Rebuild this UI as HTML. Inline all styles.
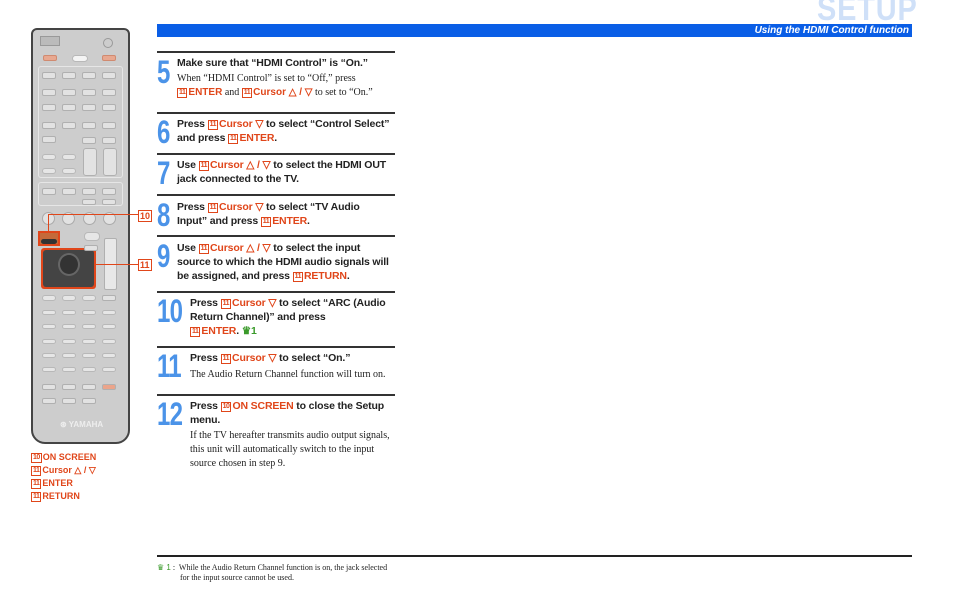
<!DOCTYPE html>
<html><head><meta charset="utf-8"><style>
*{margin:0;padding:0;box-sizing:border-box}
body{width:953px;height:605px;background:#fff;position:relative;overflow:hidden;font-family:"Liberation Sans",sans-serif}
.a{position:absolute}
.b{position:absolute;background:#e2e2e2;border:1px solid #b0b0b0;border-radius:2px}
.p{position:absolute;background:#e6e6e6;border:1px solid #b8b8b8;border-radius:4px}
.rule{position:absolute;left:157px;width:238px;height:2px;background:#333}
.n{position:absolute;left:157px;font:bold 32px/28px "Liberation Sans",sans-serif;color:#4b93e8;transform:scaleX(.75);transform-origin:left top;letter-spacing:-1px}
.h{position:absolute;font:bold 10.5px/14px "Liberation Sans",sans-serif;letter-spacing:-0.15px;color:#222;width:225px}
.t{position:absolute;font:10px/14px "Liberation Serif",serif;color:#222;width:220px}
.o{color:#e0461a}
.k{display:inline-block;border:1px solid #e0461a;color:#e0461a;font-size:7px;line-height:8px;padding:0 1px;margin-right:1px;vertical-align:1px;letter-spacing:-0.5px}
.g{color:#3a9a2a}
.lg{position:absolute;left:31px;font:bold 9px/12px "Liberation Sans",sans-serif;color:#e0461a}
</style></head><body>

<div class="a" style="left:817px;top:-8px;font:bold 34px/34px 'Liberation Sans',sans-serif;color:#cfe0f8;letter-spacing:1px;transform:scaleX(.85);transform-origin:left top">SETUP</div>
<div class="a" style="left:157px;top:24px;width:755px;height:13px;background:#0a5ee6"></div>
<div class="a" style="left:700px;top:24px;width:209px;text-align:right;font:italic bold 10px/13px 'Liberation Sans',sans-serif;color:#fff">Using the HDMI Control function</div>

<!-- remote -->
<div class="a" style="left:31px;top:28px;width:99px;height:416px;background:#cdcdcd;border:2px solid #444;border-radius:6px 6px 14px 14px"></div>
<div class="a" style="left:40px;top:36px;width:20px;height:10px;background:#bbb;border:1px solid #999"></div>
<div class="a" style="left:103px;top:38px;width:10px;height:10px;border:1px solid #999;border-radius:50%"></div>
<div class="b" style="left:43px;top:55px;width:14px;height:6px;background:#e8a890;border-color:#d08a70"></div>
<div class="b" style="left:102px;top:55px;width:14px;height:6px;background:#e8a890;border-color:#d08a70"></div>
<div class="p" style="left:72px;top:55px;width:16px;height:7px;background:#f4f4f4"></div>
<div class="a" style="left:38px;top:66px;width:85px;height:112px;border:1px solid #e6e6e6;border-radius:3px"></div>
<div class="b" style="left:42px;top:72px;width:14px;height:7px"></div><div class="b" style="left:62px;top:72px;width:14px;height:7px"></div><div class="b" style="left:82px;top:72px;width:14px;height:7px"></div><div class="b" style="left:102px;top:72px;width:14px;height:7px"></div>
<div class="b" style="left:42px;top:89px;width:14px;height:7px"></div><div class="b" style="left:62px;top:89px;width:14px;height:7px"></div><div class="b" style="left:82px;top:89px;width:14px;height:7px"></div><div class="b" style="left:102px;top:89px;width:14px;height:7px"></div>
<div class="b" style="left:42px;top:104px;width:14px;height:7px"></div><div class="b" style="left:62px;top:104px;width:14px;height:7px"></div><div class="b" style="left:82px;top:104px;width:14px;height:7px"></div><div class="b" style="left:102px;top:104px;width:14px;height:7px"></div>
<div class="b" style="left:42px;top:122px;width:14px;height:7px"></div><div class="b" style="left:62px;top:122px;width:14px;height:7px"></div><div class="b" style="left:82px;top:122px;width:14px;height:7px"></div><div class="b" style="left:102px;top:122px;width:14px;height:7px"></div>
<div class="b" style="left:42px;top:136px;width:14px;height:7px"></div><div class="b" style="left:82px;top:137px;width:14px;height:7px"></div><div class="b" style="left:102px;top:137px;width:14px;height:7px"></div>
<div class="p" style="left:42px;top:154px;width:14px;height:6px"></div><div class="p" style="left:62px;top:154px;width:14px;height:6px"></div>
<div class="p" style="left:42px;top:168px;width:14px;height:6px"></div><div class="p" style="left:62px;top:168px;width:14px;height:6px"></div>
<div class="b" style="left:83px;top:148px;width:14px;height:28px;border-radius:3px"></div><div class="b" style="left:103px;top:148px;width:14px;height:28px;border-radius:3px"></div>
<div class="a" style="left:38px;top:182px;width:85px;height:24px;border:1px solid #e6e6e6;border-radius:3px"></div>
<div class="b" style="left:42px;top:188px;width:14px;height:7px"></div><div class="b" style="left:62px;top:188px;width:14px;height:7px"></div><div class="b" style="left:82px;top:188px;width:14px;height:7px"></div><div class="b" style="left:102px;top:188px;width:14px;height:7px"></div>
<div class="b" style="left:82px;top:199px;width:14px;height:6px"></div><div class="b" style="left:102px;top:199px;width:14px;height:6px"></div>
<div class="a" style="left:42px;top:212px;width:13px;height:13px;border-radius:50%;background:#e2e2e2;border:1px solid #aaa"></div>
<div class="a" style="left:62px;top:212px;width:13px;height:13px;border-radius:50%;background:#e2e2e2;border:1px solid #aaa"></div>
<div class="a" style="left:83px;top:212px;width:13px;height:13px;border-radius:50%;background:#e2e2e2;border:1px solid #aaa"></div>
<div class="a" style="left:103px;top:212px;width:13px;height:13px;border-radius:50%;background:#e2e2e2;border:1px solid #aaa"></div>
<div class="a" style="left:38px;top:231px;width:22px;height:15px;background:#c46a3a;border:2px solid #e0461a"></div>
<div class="a" style="left:41px;top:239px;width:16px;height:5px;background:#333;border-radius:3px"></div>
<div class="p" style="left:84px;top:232px;width:16px;height:9px"></div>
<div class="b" style="left:104px;top:238px;width:13px;height:52px;background:#e8e8e8"></div>
<div class="a" style="left:41px;top:248px;width:55px;height:41px;background:#e0461a;border-radius:3px"></div>
<div class="a" style="left:43px;top:250px;width:51px;height:37px;background:#444;border-radius:3px"></div>
<div class="a" style="left:58px;top:253px;width:22px;height:23px;border-radius:50%;background:#333;border:2px solid #666"></div>
<div class="b" style="left:84px;top:245px;width:14px;height:6px"></div>
<div class="p" style="left:42px;top:295px;width:14px;height:6px"></div><div class="p" style="left:62px;top:295px;width:14px;height:6px"></div><div class="p" style="left:82px;top:295px;width:14px;height:6px"></div><div class="b" style="left:102px;top:295px;width:14px;height:6px"></div>
<div class="p" style="left:42px;top:310px;width:14px;height:5px"></div><div class="p" style="left:62px;top:310px;width:14px;height:5px"></div><div class="p" style="left:82px;top:310px;width:14px;height:5px"></div><div class="p" style="left:102px;top:310px;width:14px;height:5px"></div>
<div class="p" style="left:42px;top:324px;width:14px;height:5px"></div><div class="p" style="left:62px;top:324px;width:14px;height:5px"></div><div class="p" style="left:82px;top:324px;width:14px;height:5px"></div><div class="p" style="left:102px;top:324px;width:14px;height:5px"></div>
<div class="p" style="left:42px;top:339px;width:14px;height:5px"></div><div class="p" style="left:62px;top:339px;width:14px;height:5px"></div><div class="p" style="left:82px;top:339px;width:14px;height:5px"></div><div class="p" style="left:102px;top:339px;width:14px;height:5px"></div>
<div class="p" style="left:42px;top:353px;width:14px;height:5px"></div><div class="p" style="left:62px;top:353px;width:14px;height:5px"></div><div class="p" style="left:82px;top:353px;width:14px;height:5px"></div><div class="p" style="left:102px;top:353px;width:14px;height:5px"></div>
<div class="p" style="left:42px;top:367px;width:14px;height:5px"></div><div class="p" style="left:62px;top:367px;width:14px;height:5px"></div><div class="p" style="left:82px;top:367px;width:14px;height:5px"></div><div class="p" style="left:102px;top:367px;width:14px;height:5px"></div>
<div class="b" style="left:42px;top:384px;width:14px;height:6px"></div><div class="b" style="left:62px;top:384px;width:14px;height:6px"></div><div class="b" style="left:82px;top:384px;width:14px;height:6px"></div><div class="b" style="left:102px;top:384px;width:14px;height:6px;background:#eba48a"></div>
<div class="b" style="left:42px;top:398px;width:14px;height:6px"></div><div class="b" style="left:62px;top:398px;width:14px;height:6px"></div><div class="b" style="left:82px;top:398px;width:14px;height:6px"></div>
<div class="a" style="left:60px;top:420px;font:bold 8px 'Liberation Sans',sans-serif;color:#eee">⊛ YAMAHA</div>
<!-- callouts -->
<div class="a" style="left:48px;top:214px;width:90px;height:17px;border-top:1px solid #e0461a;border-left:1px solid #e0461a"></div>
<div class="a" style="left:96px;top:264px;width:42px;height:1px;background:#e0461a"></div>
<div class="a" style="left:138px;top:210px;font:bold 9px/10px 'Liberation Sans',sans-serif;color:#e0461a;border:1px solid #e0461a;padding:0 1px">10</div>
<div class="a" style="left:138px;top:259px;font:bold 9px/10px 'Liberation Sans',sans-serif;color:#e0461a;border:1px solid #e0461a;padding:0 1px">11</div>

<div class="lg" style="top:451px"><span class="k">10</span>ON SCREEN</div>
<div class="lg" style="top:464px"><span class="k">11</span>Cursor △ / ▽</div>
<div class="lg" style="top:477px"><span class="k">11</span>ENTER</div>
<div class="lg" style="top:490px"><span class="k">11</span>RETURN</div>

<!-- steps -->
<div class="rule" style="top:51px"></div>
<div class="n" style="top:58px">5</div>
<div class="h" style="left:177px;top:56px">Make sure that “HDMI Control” is “On.”</div>
<div class="t" style="left:177px;top:72px">When “HDMI Control” is set to “Off,” press<br><b class="o" style="font-family:'Liberation Sans'"><span class="k">11</span>ENTER</b> and <b class="o" style="font-family:'Liberation Sans'"><span class="k">11</span>Cursor △ / ▽</b> to set to “On.”</div>

<div class="rule" style="top:112px"></div>
<div class="n" style="top:118px">6</div>
<div class="h" style="left:177px;top:117px;width:222px">Press <span class="o"><span class="k">11</span>Cursor ▽</span> to select “Control Select” and press <span class="o"><span class="k">11</span>ENTER</span>.</div>

<div class="rule" style="top:153px"></div>
<div class="n" style="top:159px">7</div>
<div class="h" style="left:177px;top:158px;width:222px">Use <span class="o"><span class="k">11</span>Cursor △ / ▽</span> to select the HDMI OUT jack connected to the TV.</div>

<div class="rule" style="top:194px"></div>
<div class="n" style="top:201px">8</div>
<div class="h" style="left:177px;top:200px;width:200px">Press <span class="o"><span class="k">11</span>Cursor ▽</span> to select “TV Audio Input” and press <span class="o"><span class="k">11</span>ENTER</span>.</div>

<div class="rule" style="top:235px"></div>
<div class="n" style="top:242px">9</div>
<div class="h" style="left:177px;top:241px;width:212px">Use <span class="o"><span class="k">11</span>Cursor △ / ▽</span> to select the input source to which the HDMI audio signals will be assigned, and press <span class="o"><span class="k">11</span>RETURN</span>.</div>

<div class="rule" style="top:291px"></div>
<div class="n" style="top:297px">10</div>
<div class="h" style="left:190px;top:296px;width:212px">Press <span class="o"><span class="k">11</span>Cursor ▽</span> to select “ARC (Audio Return Channel)” and press<br><span class="o"><span class="k">11</span>ENTER</span>. <span class="g">♛1</span></div>

<div class="rule" style="top:346px"></div>
<div class="n" style="top:352px">11</div>
<div class="h" style="left:190px;top:351px">Press <span class="o"><span class="k">11</span>Cursor ▽</span> to select “On.”</div>
<div class="t" style="left:190px;top:368px;width:210px">The Audio Return Channel function will turn on.</div>

<div class="rule" style="top:394px"></div>
<div class="n" style="top:400px">12</div>
<div class="h" style="left:190px;top:399px;width:210px">Press <span class="o"><span class="k">10</span>ON SCREEN</span> to close the Setup menu.</div>
<div class="t" style="left:190px;top:429px;width:205px">If the TV hereafter transmits audio output signals, this unit will automatically switch to the input source chosen in step 9.</div>

<div class="a" style="left:157px;top:555px;width:755px;height:2px;background:#222"></div>
<div class="a" style="left:157px;top:563px;font:8px/10px 'Liberation Serif',serif;color:#222"><span class="g" style="font-family:'Liberation Sans'">♛ 1</span> :&nbsp; While the Audio Return Channel function is on, the jack selected<br><span style="padding-left:23px">for the input source cannot be used.</span></div>
</body></html>
